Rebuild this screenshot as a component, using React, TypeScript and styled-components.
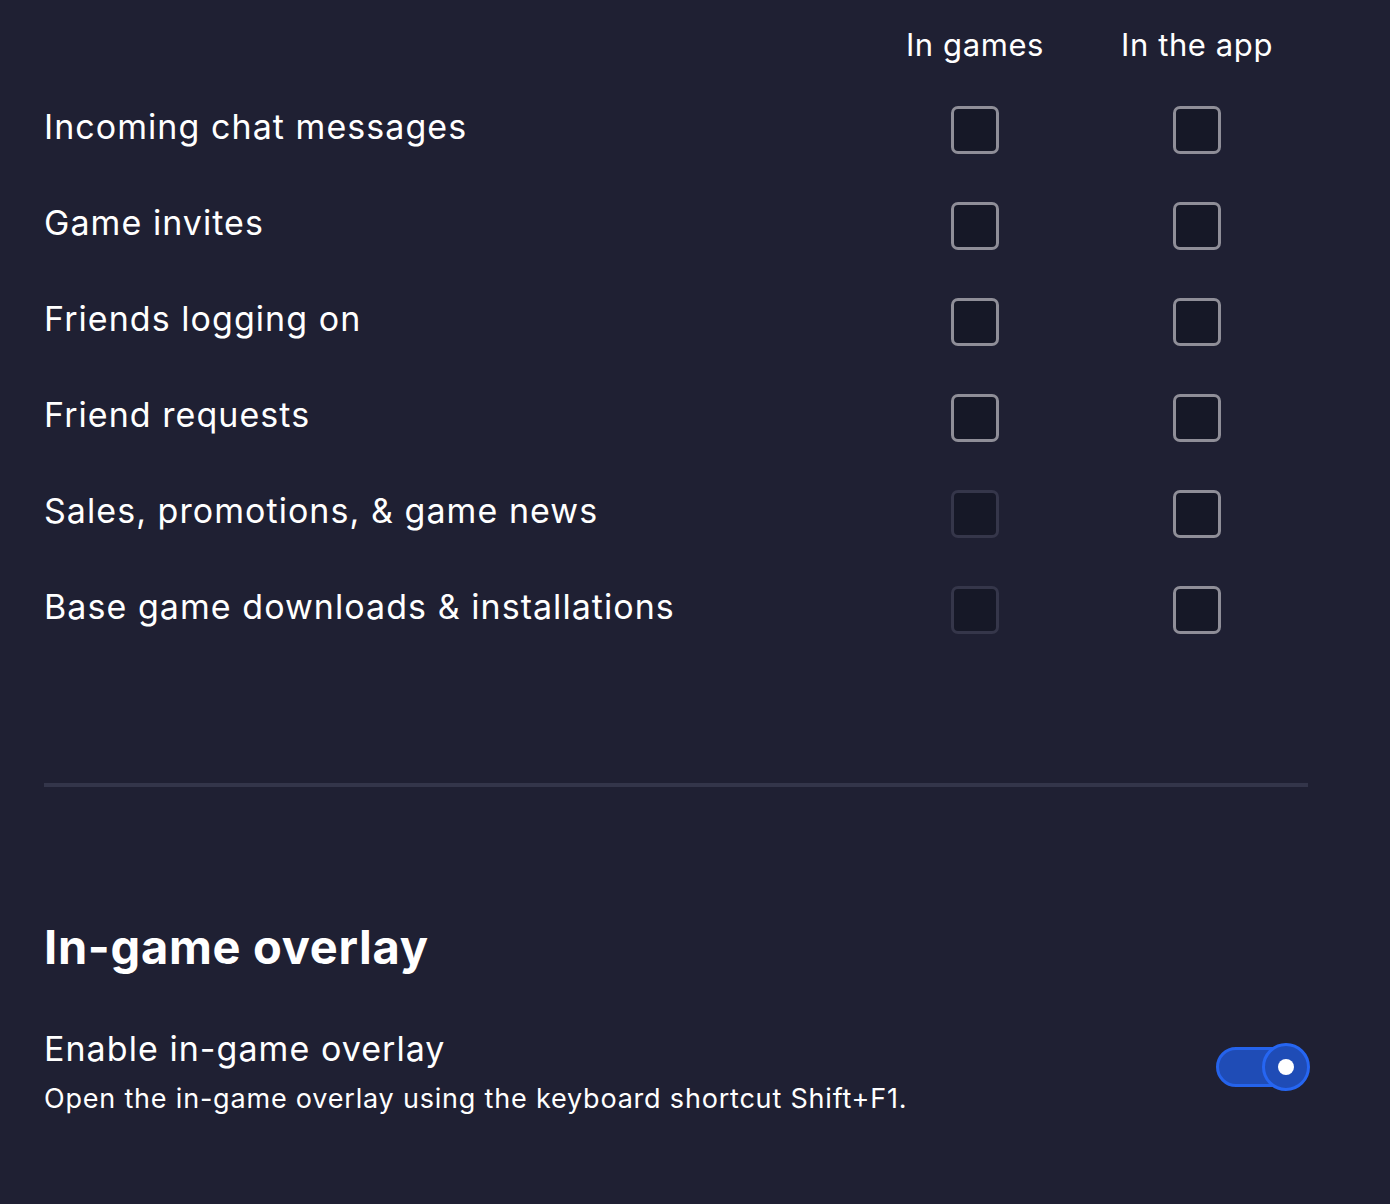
import React from "react";
import styled, { createGlobalStyle } from "styled-components";

const Global = createGlobalStyle`
  html, body { margin: 0; padding: 0; background: #1f2033; }
  body { font-family: Inter, "Noto Sans", "Liberation Sans", sans-serif; color: #ffffff; }
  * { box-sizing: border-box; }
`;

const Page = styled.div`
  width: 1390px;
  min-height: 1204px;
  background: #1f2033;
  padding: 0 80px 0 44px;
`;

const Grid = styled.div`
  display: grid;
  grid-template-columns: 1fr 222px 222px;
  width: 1264px;
`;

const HeaderCell = styled.div`
  height: 82px;
  padding-top: 7px;
  display: flex;
  align-items: center;
  justify-content: center;
  font-size: 31px;
  letter-spacing: 0.6px;
  color: #ffffff;
`;

const Label = styled.div`
  height: 96px;
  display: flex;
  align-items: center;
  padding-bottom: 7px;
  font-size: 34px;
  letter-spacing: 1.05px;
  color: #ffffff;
`;

const BoxCell = styled.div`
  height: 96px;
  display: flex;
  align-items: center;
  justify-content: center;
`;

const Box = styled.div<{ $disabled?: boolean }>`
  width: 48px;
  height: 48px;
  border-radius: 7px;
  border: 3px solid ${(p) => (p.$disabled ? "#35364a" : "#8f8e98")};
  background: #161827;
`;

const Divider = styled.hr`
  margin: 125px 0 0 0;
  border: none;
  height: 4px;
  background: #33354a;
  width: 1264px;
`;

const Heading = styled.h2`
  margin: 132px 0 0 0;
  font-size: 47px;
  font-weight: 700;
  line-height: 56px;
  letter-spacing: 0.7px;
`;

const SettingRow = styled.div`
  margin-top: 52px;
  display: flex;
  align-items: flex-start;
  justify-content: space-between;
  width: 1266px;
`;

const SettingText = styled.div`
  display: flex;
  flex-direction: column;
`;

const SettingTitle = styled.div`
  font-size: 34px;
  line-height: 44px;
  letter-spacing: 1.05px;
`;

const SettingDesc = styled.div`
  margin-top: 8px;
  font-size: 27px;
  line-height: 40px;
  letter-spacing: 0.8px;
`;

const Toggle = styled.div`
  position: relative;
  margin-top: 16px;
  width: 94px;
  height: 48px;
  display: flex;
  align-items: center;
`;

const Track = styled.div`
  width: 92px;
  height: 40px;
  border-radius: 20px;
  border: 3px solid #2563eb;
  background: #1f4cb6;
`;

const Knob = styled.div`
  position: absolute;
  right: 0;
  top: 0;
  width: 48px;
  height: 48px;
  border-radius: 50%;
  border: 3px solid #2666f2;
  background: #1f4cb6;
  display: flex;
  align-items: center;
  justify-content: center;
  &::after {
    content: "";
    width: 16px;
    height: 16px;
    border-radius: 50%;
    background: #ffffff;
  }
`;

const rows: { label: string; games: boolean }[] = [
  { label: "Incoming chat messages", games: true },
  { label: "Game invites", games: true },
  { label: "Friends logging on", games: true },
  { label: "Friend requests", games: true },
  { label: "Sales, promotions, & game news", games: false },
  { label: "Base game downloads & installations", games: false },
];

export default function App() {
  return (
    <Page>
      <Global />
      <Grid>
        <HeaderCell />
        <HeaderCell>In games</HeaderCell>
        <HeaderCell>In the app</HeaderCell>
        {rows.map((r) => (
          <React.Fragment key={r.label}>
            <Label>{r.label}</Label>
            <BoxCell>
              <Box $disabled={!r.games} />
            </BoxCell>
            <BoxCell>
              <Box />
            </BoxCell>
          </React.Fragment>
        ))}
      </Grid>
      <Divider />
      <Heading>In-game overlay</Heading>
      <SettingRow>
        <SettingText>
          <SettingTitle>Enable in-game overlay</SettingTitle>
          <SettingDesc>Open the in-game overlay using the keyboard shortcut Shift+F1.</SettingDesc>
        </SettingText>
        <Toggle>
          <Track />
          <Knob />
        </Toggle>
      </SettingRow>
    </Page>
  );
}
